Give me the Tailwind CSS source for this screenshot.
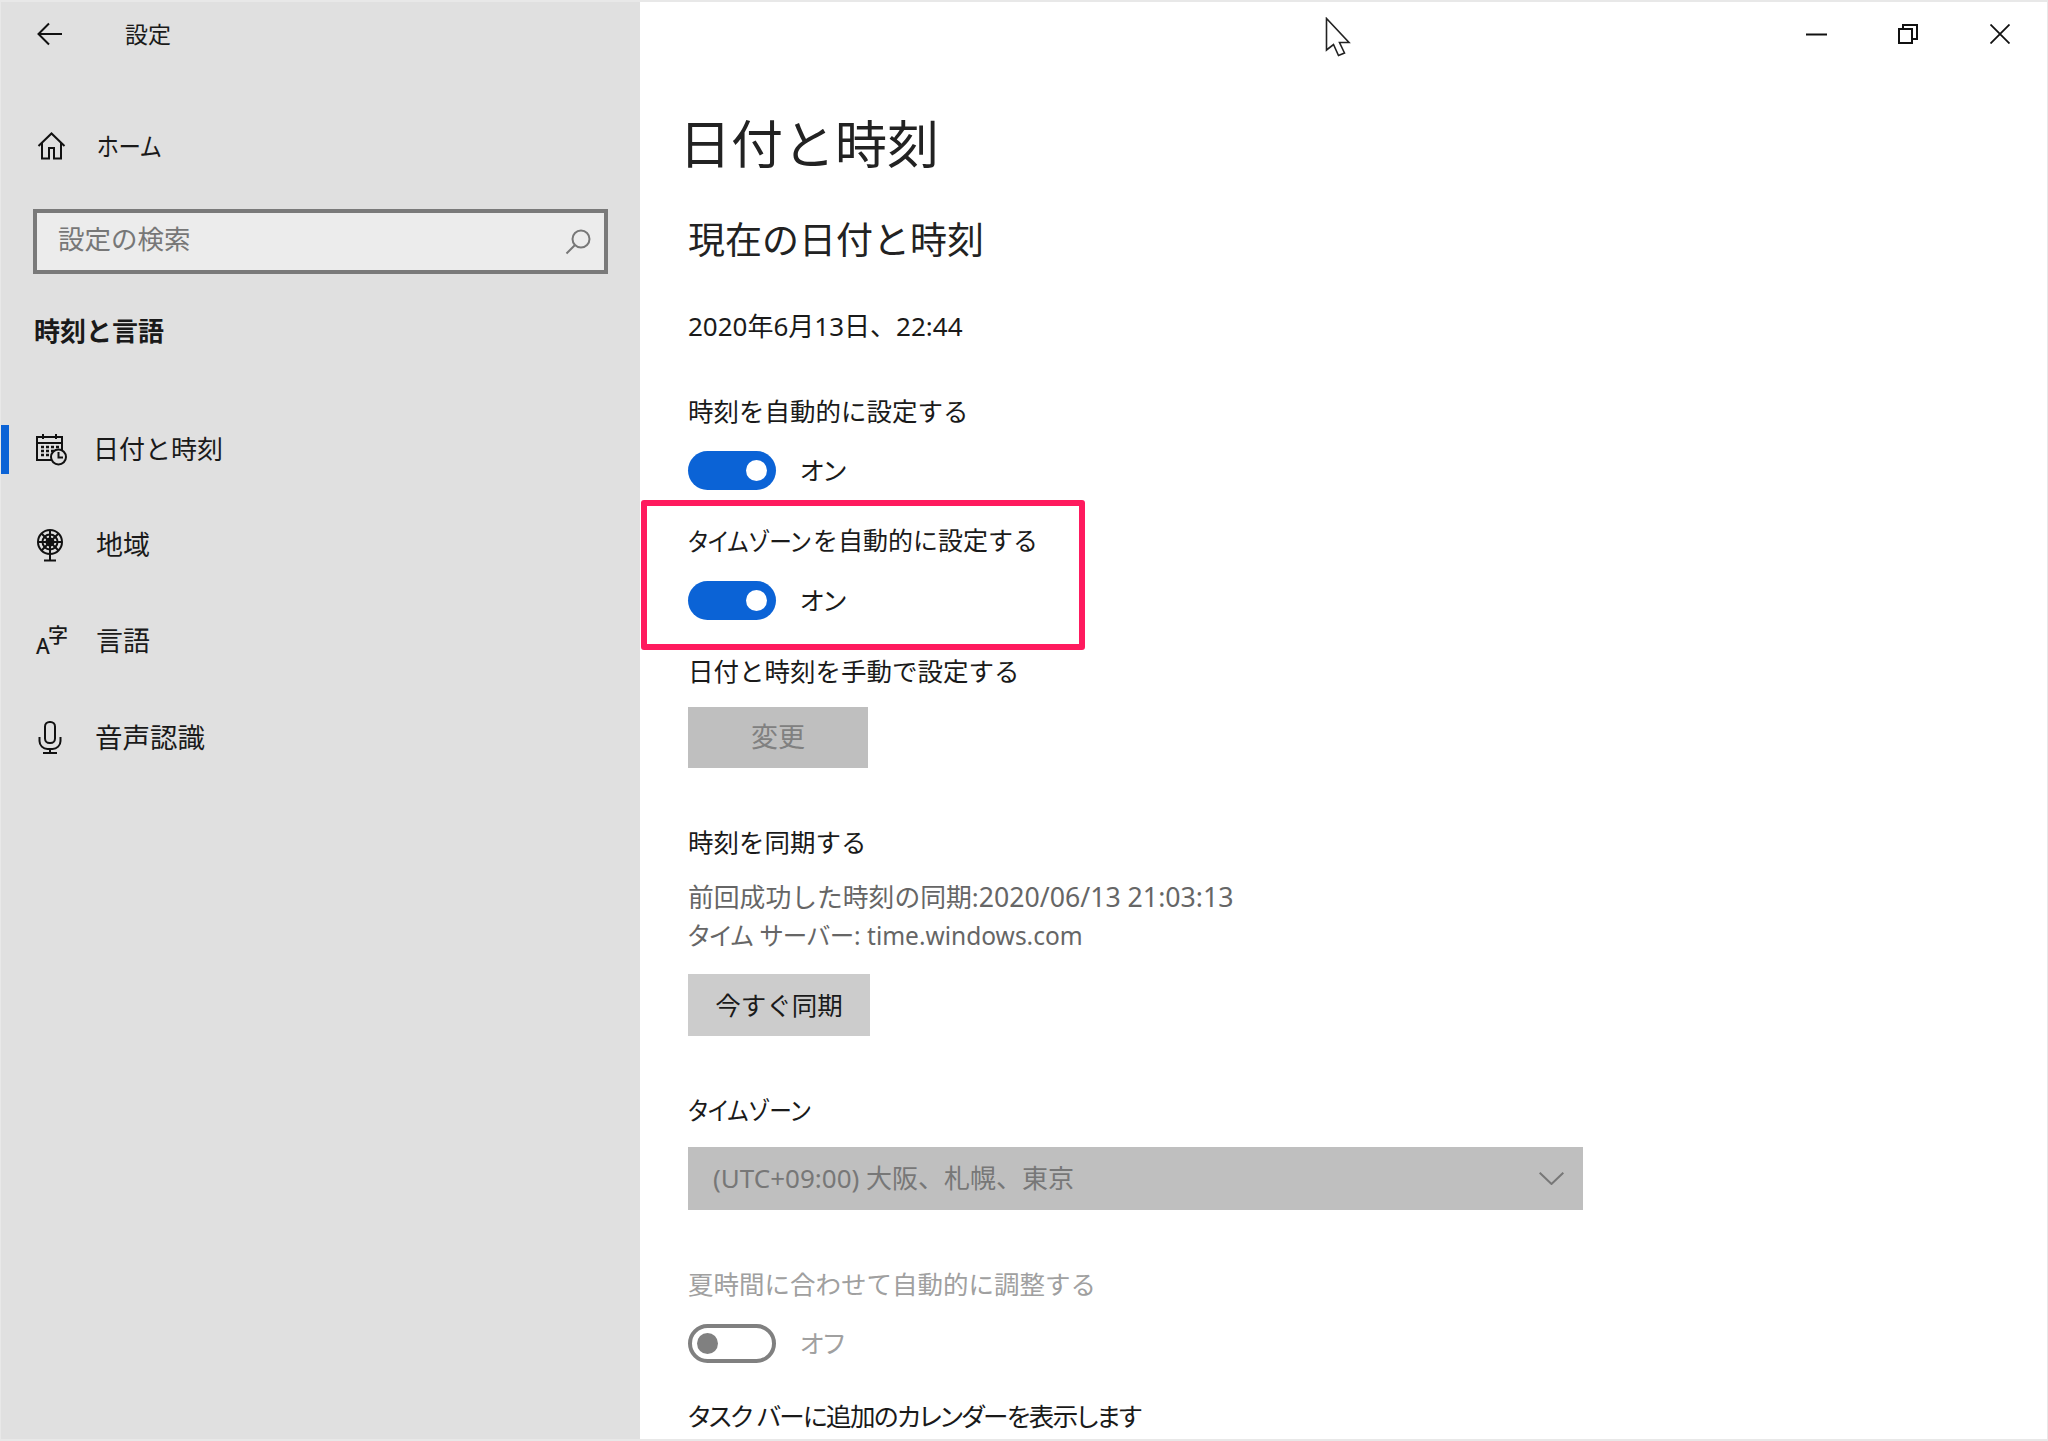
<!DOCTYPE html>
<html lang="ja">
<head>
    <meta charset="UTF-8">
    <title>設定</title>
    <script src="https://cdn.jsdelivr.net/npm/@tailwindcss/browser@4"></script>
</head>
<body class="bg-white font-['Noto_Sans','Noto_Sans_CJK_JP',sans-serif] text-[25.5px] text-[#1a1a1a] overflow-hidden">
<div class="relative flex w-[2048px] h-[1441px] overflow-hidden border-t-2 border-b-2 border-x border-[#e8e8e8]">

    <!-- Sidebar -->
    <aside class="w-[639px] shrink-0 h-full bg-[#e0e0e0] flex flex-col">
        <div class="h-[64px] flex items-center pl-[36px]">
            <svg class="w-[26px] h-[24px]" viewBox="0 0 26 24" fill="none" stroke="#111" stroke-width="2"><path d="M25 12H2M12 1.500 1.500 12 12 22.500"/></svg>
            <span class="ml-[62px] text-[23px]">設定</span>
        </div>
        <div class="mt-[48px] h-[64px] flex items-center pl-[36px]">
            <svg class="w-[29px] h-[28px]" viewBox="0 0 29 28" fill="none" stroke="#111" stroke-width="2"><path d="M1.500 14 14.500 1.500 27.500 14M5 11v15.500h7V16h5v10.500h7V11"/></svg>
            <span class="ml-[31px] inline-block w-[62px] whitespace-nowrap origin-left scale-x-[.88] [font-feature-settings:'palt']">ホーム</span>
        </div>
        <div class="mt-[31px] ml-[32px] w-[575px] h-[65px] border-4 border-[#7a7a7a] bg-[#ececec] flex items-center justify-between pl-[21px] pr-[13px]">
            <span class="text-[#777] text-[26.5px] pb-[4px]">設定の検索</span>
            <svg class="w-[26px] h-[26px]" viewBox="0 0 26 26" fill="none" stroke="#777" stroke-width="2"><circle cx="16" cy="10" r="8.500"/><path d="M10 16 1.500 24.500"/></svg>
        </div>
        <div class="mt-[37px] ml-[33px] h-[40px] flex items-center font-bold text-[26px]">時刻と言語</div>

        <nav class="mt-[74px] flex flex-col">
            <div class="relative h-[49px] flex items-center pl-[34px]">
                <span class="absolute left-0 top-0 w-[8px] h-[49px] bg-[#0b63d6]"></span>
                <svg class="w-[32px] h-[33px]" viewBox="0 0 32 33" fill="none" stroke="#111" stroke-width="2">
                    <path d="M17 27H2V4h25v14M2 10h25M8 1v5M21 1v5"/>
                    <path d="M6 14h3M11 14h3M16 14h3M21 14h3M6 18h3M11 18h3M16 18h3M6 22h3M11 22h3" stroke-width="2.500"/>
                    <circle cx="23.500" cy="24" r="7.500" fill="#e0e0e0"/><path d="M23.500 19v5.500H28"/>
                </svg>
                <span class="ml-[26px] text-[26px]">日付と時刻</span>
            </div>
            <div class="mt-[47px] h-[49px] flex items-center pl-[34px]">
                <svg class="w-[30px] h-[33px]" viewBox="0 0 30 33" fill="none" stroke="#111" stroke-width="2">
                    <circle cx="15" cy="13" r="12"/><circle cx="15" cy="13" r="7.500"/><circle cx="15" cy="13" r="3.500"/>
                    <path d="M3 13h24M15 1v24M6.500 4.500l17 17M23.500 4.500l-17 17M15 25v6M9 31.500h12"/>
                </svg>
                <span class="ml-[31px] text-[27px]">地域</span>
            </div>
            <div class="mt-[47px] h-[49px] flex items-center pl-[35px]">
                <span class="relative w-[30px] h-[33px] block font-medium">
                    <span class="absolute left-0 bottom-0 text-[21px] leading-[24px]">A</span>
                    <span class="absolute right-[-2px] top-0 text-[20px] leading-[22px]">字</span>
                </span>
                <span class="ml-[30px] text-[27px]">言語</span>
            </div>
            <div class="mt-[47px] h-[49px] flex items-center pl-[37px]">
                <svg class="w-[24px] h-[33px]" viewBox="0 0 24 33" fill="none" stroke="#111" stroke-width="2">
                    <rect x="7" y="1" width="10" height="21" rx="4.500"/>
                    <path d="M1.500 16v4a8 8 0 0 0 8 8h5a8 8 0 0 0 8-8v-4M12 28v4M5 32h14"/>
                </svg>
                <span class="ml-[33px] text-[27.500px]">音声認識</span>
            </div>
        </nav>
    </aside>

    <!-- Main content -->
    <main class="flex-1 h-full flex flex-col pl-[48px]">
        <div class="h-[64px] shrink-0 flex items-center justify-end">
            <svg class="w-[21px] h-[3px]" viewBox="0 0 21 3"><path d="M0 1.500h21" stroke="#111" stroke-width="2"/></svg>
            <svg class="ml-[71px] w-[20px] h-[20px]" viewBox="0 0 20 20" fill="none" stroke="#111" stroke-width="2"><rect x="1" y="5" width="13" height="14"/><path d="M5 5V1h14v14h-5"/></svg>
            <svg class="ml-[72px] mr-[37px] w-[20px] h-[20px]" viewBox="0 0 20 20" fill="none" stroke="#111" stroke-width="1.800"><path d="M.5.500l19 19M19.500.500l-19 19"/></svg>
        </div>

        <h1 class="mt-[48px] h-[60px] flex items-center text-[52px] font-normal text-[#222] -ml-[9px]">日付と時刻</h1>
        <h2 class="mt-[42px] h-[48px] flex items-center text-[37px] font-normal text-[#222]">現在の日付と時刻</h2>
        <div class="mt-[42px] h-[40px] flex items-center text-[26px]">2020年6月13日、22:44</div>

        <div class="mt-[46px] h-[40px] pb-[2px] flex items-center">時刻を自動的に設定する</div>
        <div class="mt-[19px] h-[39px] flex items-center">
            <span class="w-[88px] h-[39px] rounded-full bg-[#0b63d6] flex items-center justify-end pr-[9px]"><span class="w-[21px] h-[21px] rounded-full bg-white"></span></span>
            <span class="ml-[24px] [font-feature-settings:'palt']">オン</span>
        </div>

        <div class="mt-[32px] h-[40px] pb-[2px] flex items-center whitespace-nowrap">
            <span class="inline-block w-[125px] origin-left scale-x-[.89] [font-feature-settings:'palt']">タイムゾーン</span><span class="text-[25px]">を自動的に設定する</span>
        </div>
        <div class="mt-[19px] h-[39px] flex items-center">
            <span class="w-[88px] h-[39px] rounded-full bg-[#0b63d6] flex items-center justify-end pr-[9px]"><span class="w-[21px] h-[21px] rounded-full bg-white"></span></span>
            <span class="ml-[24px] [font-feature-settings:'palt']">オン</span>
        </div>

        <div class="mt-[32px] h-[40px] pb-[2px] flex items-center">日付と時刻を手動で設定する</div>
        <div class="mt-[15px] w-[180px] h-[61px] bg-[#bfbfbf] text-[#808080] text-[27px] flex items-center justify-center">変更</div>

        <div class="mt-[55px] h-[40px] pb-[2px] flex items-center">時刻を同期する</div>
        <div class="mt-[14px] h-[40px] flex items-center whitespace-pre text-[#666] text-[25.800px]">前回成功した時刻の同期:<span class="text-[26.700px]">2020/06/13 21:03:13</span></div>
        <div class="h-[39px] flex items-center text-[#666] text-[24.5px] whitespace-pre [font-feature-settings:'palt']">タイム サーバー: time.windows.com</div>
        <div class="mt-[18px] w-[182px] h-[62px] bg-[#cccccc] flex items-center justify-center">今すぐ同期</div>

        <div class="mt-[55px] h-[40px] pb-[2px] flex items-center whitespace-nowrap">
            <span class="inline-block w-[125px] origin-left scale-x-[.89] [font-feature-settings:'palt']">タイムゾーン</span>
        </div>
        <div class="mt-[16px] w-[895px] h-[63px] bg-[#bfbfbf] text-[#777] text-[26px] flex items-center justify-between pl-[25px] pr-[19px]">
            <span>(UTC+09:00) 大阪、札幌、東京</span>
            <svg class="w-[25px] h-[13px]" viewBox="0 0 25 13" fill="none" stroke="#777" stroke-width="2"><path d="M.7.700 12.500 12 24.300.700"/></svg>
        </div>

        <div class="mt-[55px] h-[40px] pb-[2px] flex items-center text-[#a0a0a0]">夏時間に合わせて自動的に調整する</div>
        <div class="mt-[19px] h-[39px] flex items-center">
            <span class="w-[88px] h-[39px] rounded-full border-4 border-[#808080] flex items-center pl-[5px]"><span class="w-[21px] h-[21px] rounded-full bg-[#808080]"></span></span>
            <span class="ml-[24px] text-[#a0a0a0] [font-feature-settings:'palt']">オフ</span>
        </div>
        <div class="mt-[34px] h-[40px] pb-[2px] flex items-center whitespace-pre [font-feature-settings:'palt'] tracking-[-1.500px]">タスク バーに追加のカレンダーを表示します</div>
    </main>

    <!-- Red annotation frame -->
    <div class="absolute left-[640px] top-[498px] w-[444px] h-[150px] border-[6px] border-[#ff1a5e] rounded-[3px]"></div>

    <!-- Mouse pointer -->
    <svg class="absolute left-[1324px] top-[15px] w-[26px] h-[40px]" viewBox="0 0 26 40" fill="#fff" stroke="#222" stroke-width="1.600"><path d="M1.500 1.500V33l7-5.500 5 11 6-2.500-5-10.500h9.500z"/></svg>
</div>
</body>
</html>
